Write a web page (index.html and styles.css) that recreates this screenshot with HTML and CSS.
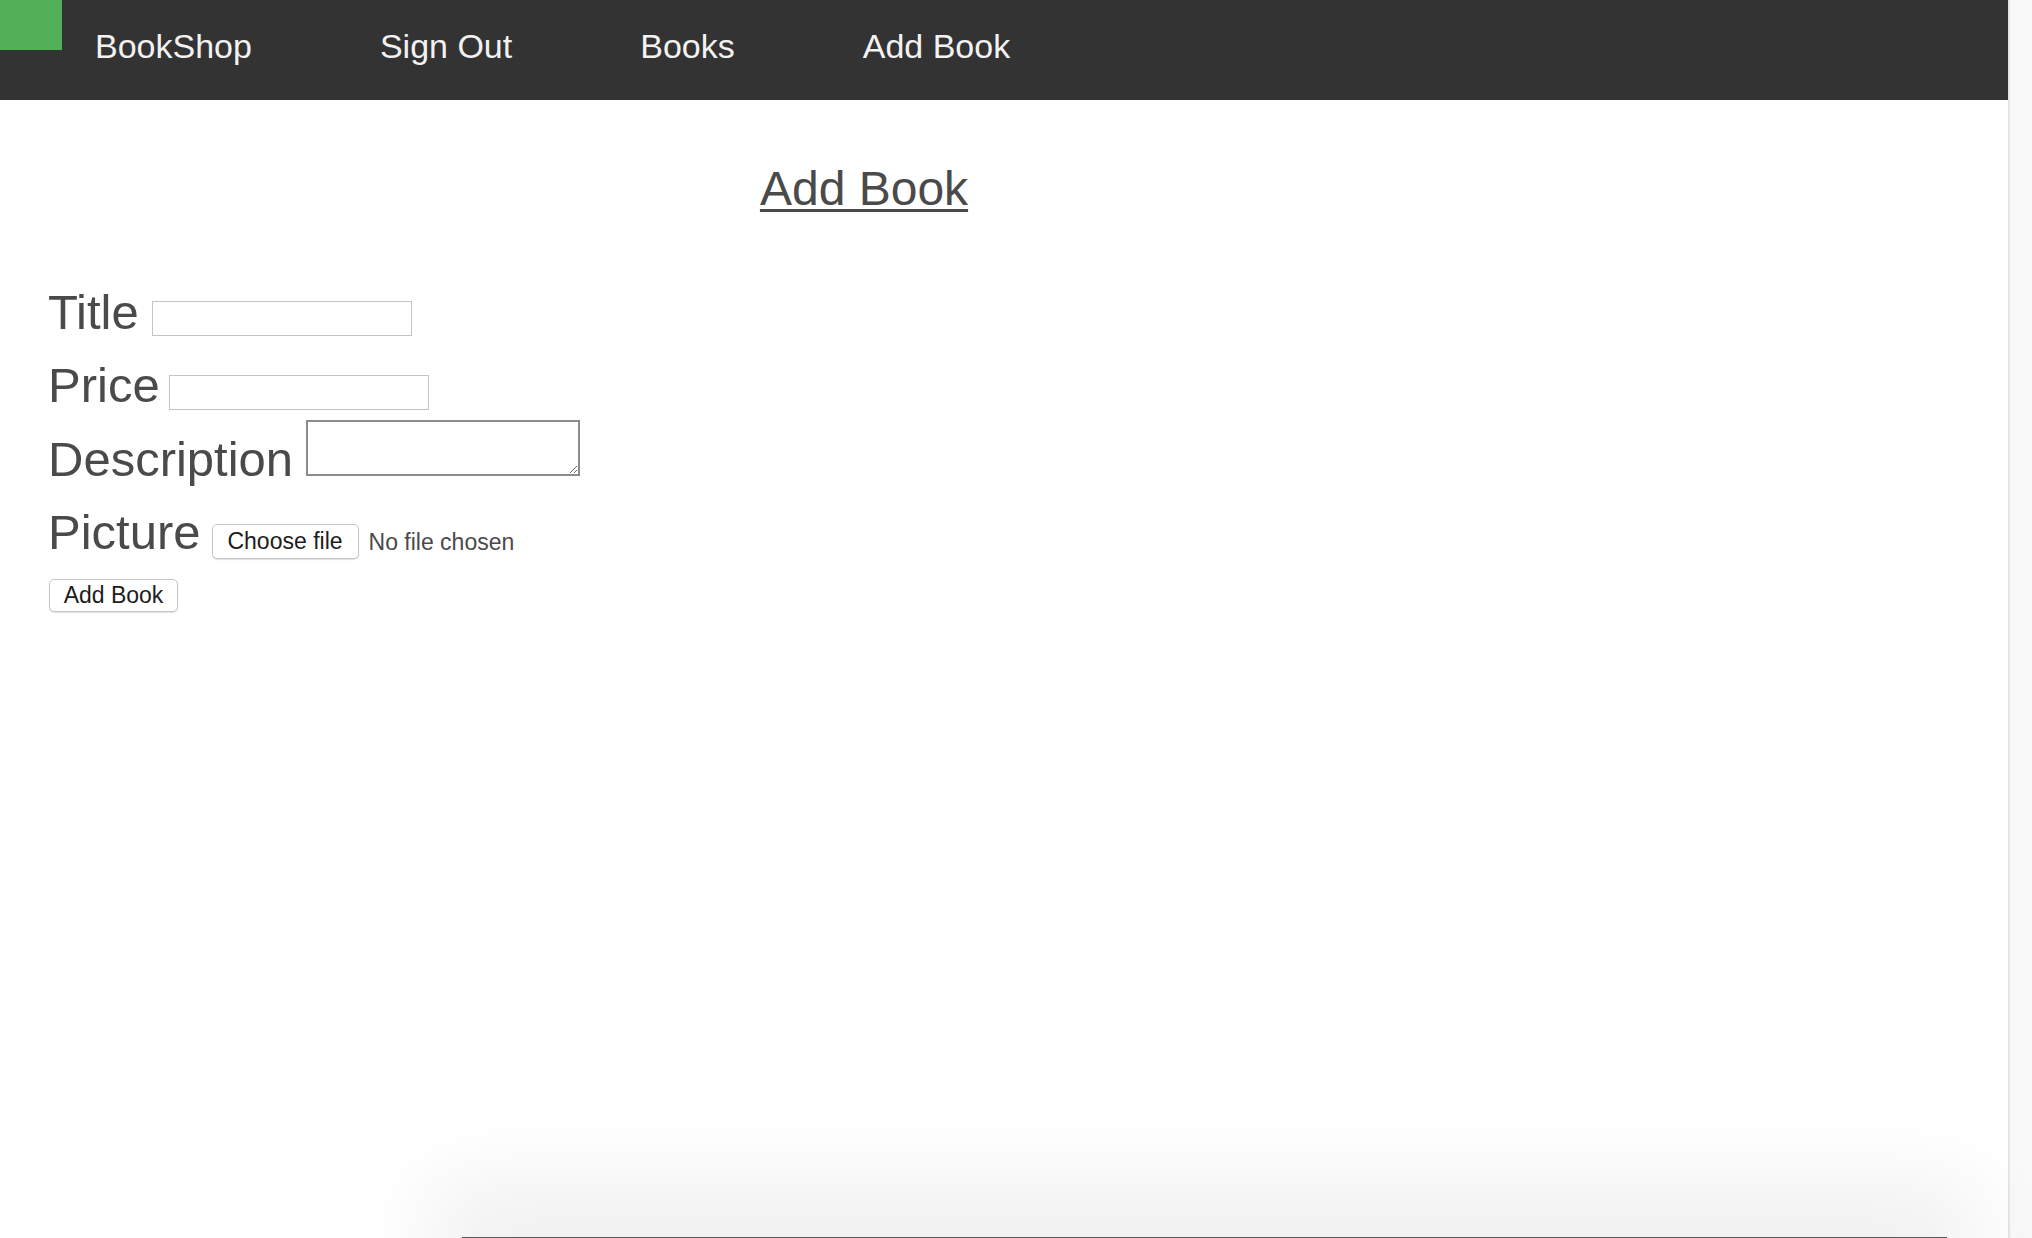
FILE: index.html
```html
<!DOCTYPE html>
<html lang="en">
<head>
<meta charset="utf-8">
<title>BookShop - Add Book</title>
<link rel="stylesheet" href="styles.css">
</head>
<body>
<div class="window">
  <div class="page">
    <nav class="topnav">
      <div class="brand-mark"></div>
      <a class="nav-link" href="#">BookShop</a>
      <a class="nav-link" href="#">Sign Out</a>
      <a class="nav-link" href="#">Books</a>
      <a class="nav-link" href="#">Add Book</a>
    </nav>
    <main class="content">
      <h1 class="page-title">Add Book</h1>
      <form class="book-form">
        <div class="row row-title">
          <label class="field-label">Title</label>
          <input class="text-input in-title" type="text">
        </div>
        <div class="row row-price">
          <label class="field-label">Price</label>
          <input class="text-input in-price" type="text">
        </div>
        <div class="row row-desc">
          <label class="field-label">Description</label>
          <textarea class="text-area"></textarea>
        </div>
        <div class="row row-pic">
          <label class="field-label">Picture</label>
          <span class="file-btn">Choose file</span>
          <span class="file-status">No file chosen</span>
        </div>
        <div class="row row-submit">
          <button class="submit-btn" type="button">Add Book</button>
        </div>
      </form>
    </main>
  </div>
  <div class="scroll-strip"></div>
</div>
<div class="dock-shadow"></div>
</body>
</html>
```

FILE: styles.css
```css
html, body {
  margin: 0;
  padding: 0;
  height: 100%;
  background: #ffffff;
  overflow: hidden;
}

body {
  font-family: "Liberation Sans", Arial, sans-serif;
}

.window {
  display: flex;
  height: 1238px;
}

.page {
  width: 2008px;
  flex: none;
}

.scroll-strip {
  flex: 1;
  background: #f9f9f9;
  border-left: 2px solid #e6e6e6;
}

/* ---------- nav ---------- */
.topnav {
  display: flex;
  align-items: flex-start;
  height: 100px;
  background: #333333;
}

.brand-mark {
  width: 62px;
  height: 50px;
  background: #52ae57;
  flex: none;
  margin-right: 33px;
}

.nav-link {
  color: #f2f2f2;
  text-decoration: none;
  font-size: 34px;
  line-height: 34px;
  padding-top: 29px;
  margin-right: 128px;
}

/* ---------- content ---------- */
.content {
  padding: 0 48px;
}

.page-title {
  width: 1632px;
  text-align: center;
  margin: 65px 0 0 0;
  font-size: 48px;
  line-height: 48px;
  font-weight: normal;
  color: #4a4a4a;
  text-decoration: underline;
  text-decoration-thickness: 3px;
  text-underline-offset: 4px;
}

.book-form {
  margin-top: 75px;
}

.row {
  display: flex;
  align-items: flex-end;
}

.field-label {
  font-size: 49px;
  line-height: 49px;
  padding-bottom: 4px;
  color: #4a4a4a;
}

.text-input {
  box-sizing: border-box;
  width: 260px;
  height: 35px;
  margin: 0 0 0 12px;
  padding: 0;
  border: 1px solid #c4c4c4;
  background: #ffffff;
  outline: none;
}

.in-title { margin-bottom: 5px; margin-left: 13px; }
.in-price { margin-bottom: 4px; margin-left: 9px; }

.row-price { margin-top: 20px; }

.row-desc { margin-top: 6px; }

.text-area {
  box-sizing: border-box;
  width: 274px;
  height: 56px;
  margin: 0 0 12px 13px;
  padding: 0;
  border: 2px solid #8c8c8c;
  background: #ffffff;
  resize: both;
  outline: none;
}

.row-pic { margin-top: 20px; }

.file-btn {
  box-sizing: border-box;
  display: inline-flex;
  align-items: center;
  justify-content: center;
  width: 147px;
  height: 35px;
  margin: 0 0 2px 11px;
  border: 1px solid #c6c6c6;
  border-radius: 5px;
  box-shadow: 0 1px 1px rgba(0, 0, 0, 0.12);
  background: #ffffff;
  color: #1c1c1c;
  font-size: 23px;
}

.file-status {
  margin: 0 0 7px 10px;
  font-size: 23px;
  line-height: 23px;
  color: #4a4a4a;
}

.row-submit { margin-top: 18px; }

.submit-btn {
  box-sizing: border-box;
  width: 129px;
  height: 33px;
  margin: 0 0 0 1px;
  padding: 0;
  border: 1px solid #c6c6c6;
  border-radius: 5px;
  box-shadow: 0 1px 1px rgba(0, 0, 0, 0.12);
  background: #ffffff;
  color: #1c1c1c;
  font-family: "Liberation Sans", Arial, sans-serif;
  font-size: 23px;
}

/* ---------- window shadow peeking from below ---------- */
.dock-shadow {
  position: fixed;
  left: 462px;
  top: 1237px;
  width: 1485px;
  height: 40px;
  background: #5a5a5a;
  box-shadow: 0 -20px 90px 30px rgba(0, 0, 0, 0.07);
}
```
